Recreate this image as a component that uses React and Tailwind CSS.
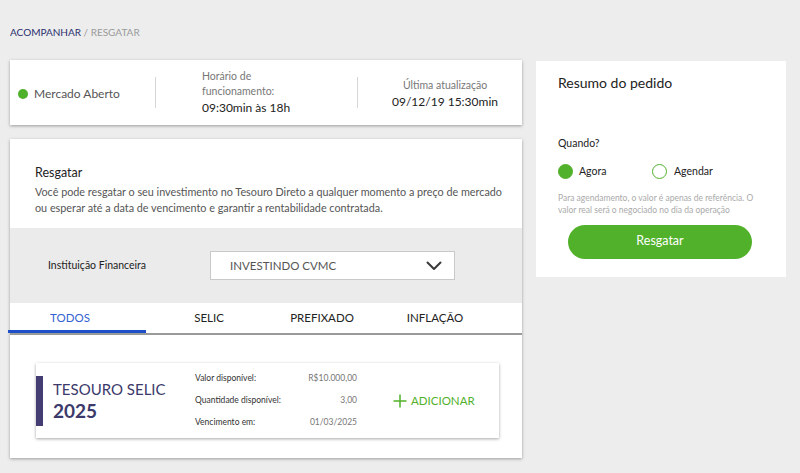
import React, { useState } from "react";

const font = { fontFamily: "Lato, 'Liberation Sans', sans-serif" };

const Chevron = () => (
  <svg width="16" height="10" viewBox="0 0 16 10" fill="none">
    <path d="M1.5 1.5 L8 8 L14.5 1.5" stroke="#3a3a3a" strokeWidth="2" strokeLinecap="round" strokeLinejoin="round" />
  </svg>
);

const tabs = [
  { label: "TODOS", cls: "w-[136px] pr-[16px]" },
  { label: "SELIC", cls: "w-[126px]" },
  { label: "PREFIXADO", cls: "w-[100px]" },
  { label: "INFLAÇÃO", cls: "w-[126px]" },
];

const rows = [
  ["Valor disponível:", "R$10.000,00"],
  ["Quantidade disponível:", "3,00"],
  ["Vencimento em:", "01/03/2025"],
];

export default function App() {
  const [tab, setTab] = useState(0);
  const [when, setWhen] = useState("agora");

  return (
    <div className="w-[800px] h-[473px] bg-[#ededed] overflow-hidden" style={font}>
      {/* breadcrumb */}
      <div className="pt-[25px] pl-[10px] h-[60px] text-[10px]">
        <span className="text-[#2c2f6e]">ACOMPANHAR</span>
        <span className="text-[#9a9a9a]"> / RESGATAR</span>
      </div>

      <div className="flex gap-[14px] pl-[10px]">
        {/* left column */}
        <div className="w-[512px] flex flex-col gap-[14px]">
          {/* status card */}
          <div className="bg-white h-[65px] flex items-center shadow-[0_1px_3px_rgba(0,0,0,0.35)]">
            <div className="w-[145px] flex items-center pl-[8px] gap-[6px] pt-[3px]">
              <span className="w-[10px] h-[10px] rounded-full bg-[#4fb12a]" />
              <span className="text-[12px] text-[#555]">Mercado Aberto</span>
            </div>
            <div className="w-px h-[31px] bg-[#d6d6d6]" />
            <div className="w-[201px] pl-[46px] flex flex-col">
              <span className="text-[10.5px] leading-[15px] text-[#777]">Horário de<br />funcionamento:</span>
              <span className="text-[12px] leading-[18px] text-[#222]">09:30min às 18h</span>
            </div>
            <div className="w-px h-[31px] bg-[#d6d6d6]" />
            <div className="flex-1 pl-[10px] pt-[3px] flex flex-col items-center">
              <span className="text-[10.5px] leading-[16px] text-[#777]">Última atualização</span>
              <span className="text-[12px] leading-[18px] text-[#222]">09/12/19 15:30min</span>
            </div>
          </div>

          {/* main card */}
          <div className="bg-white h-[319px] shadow-[0_1px_3px_rgba(0,0,0,0.35)] flex flex-col">
            <div className="pt-[25px] pl-[25px] pr-[20px] h-[89px]">
              <div className="text-[12.5px] text-[#222] leading-[18px]">Resgatar</div>
              <p className="mt-[2px] text-[10.8px] leading-[16px] text-[#555]">
                Você pode resgatar o seu investimento no Tesouro Direto a qualquer momento a preço de mercado ou esperar até a data de vencimento e garantir a rentabilidade contratada.
              </p>
            </div>

            <div className="bg-[#ebebeb] h-[75px] flex items-center">
              <span className="w-[200px] pl-[38px] text-[10.5px] text-[#222]">Instituição Financeira</span>
              <div className="w-[245px] h-[29px] bg-white border border-[#c9c9c9] flex items-center justify-between pl-[19px] pr-[12px]">
                <span className="text-[11.5px] text-[#555]">INVESTINDO CVMC</span>
                <Chevron />
              </div>
            </div>

            <div className="flex h-[32px] border-b-2 border-[#9a9a9a]">
              {tabs.map((t, i) => (
                <button
                  key={t.label}
                  onClick={() => setTab(i)}
                  className={`${t.cls} relative flex items-center justify-center text-[11.5px] ${tab === i ? "text-[#3461d1]" : "text-[#222]"}`}
                >
                  {t.label}
                  {tab === i && <span className="absolute left-[-2px] right-0 bottom-0 h-[3px] bg-[#1f4fc6]" />}
                </button>
              ))}
            </div>

            <div className="flex-1 pt-[28px] pl-[26px] pr-[23px]">
              <div className="h-[75px] flex items-center shadow-[0_1px_3px_rgba(0,0,0,0.35)] bg-white">
                <span className="w-[7px] h-[50px] bg-[#443d73]" />
                <div className="w-[152px] pl-[10px] text-[#3c3a6b]">
                  <div className="text-[15px] leading-[20px]">TESOURO SELIC</div>
                  <div className="text-[19px] leading-[24px] font-bold">2025</div>
                </div>
                <div className="w-[162px] flex flex-col gap-[9px]">
                  {rows.map(([k, v]) => (
                    <div key={k} className="flex justify-between text-[8.5px] leading-[13px]">
                      <span className="text-[#333]">{k}</span>
                      <span className="text-[#777]">{v}</span>
                    </div>
                  ))}
                </div>
                <button className="ml-[36px] flex items-center gap-[4px] text-[11.5px] text-[#52b12a]">
                  <svg width="14" height="14" viewBox="0 0 14 14">
                    <path d="M7 0.5 V13.5 M0.5 7 H13.5" stroke="#52b12a" strokeWidth="1.5" />
                  </svg>
                  ADICIONAR
                </button>
              </div>
            </div>
          </div>
        </div>

        {/* right column */}
        <div className="w-[250px] h-[216px] mt-[1px] bg-white flex flex-col pl-[22px] pr-[20px]">
          <div className="pt-[12px] text-[14px] leading-[20px] text-[#222]">Resumo do pedido</div>
          <div className="mt-[43px] text-[10.5px] leading-[14px] text-[#222]">Quando?</div>
          <div className="mt-[14px] flex items-center">
            <button onClick={() => setWhen("agora")} className="flex items-center gap-[6px] w-[94px]">
              <span className={`w-[15px] h-[15px] rounded-full border-[1.5px] border-[#52b12a] ${when === "agora" ? "bg-[#52b12a]" : "bg-white"}`} />
              <span className="text-[10.5px] text-[#222]">Agora</span>
            </button>
            <button onClick={() => setWhen("agendar")} className="flex items-center gap-[7px]">
              <span className={`w-[15px] h-[15px] rounded-full border-[1.5px] border-[#52b12a] ${when === "agendar" ? "bg-[#52b12a]" : "bg-white"}`} />
              <span className="text-[10.5px] text-[#222]">Agendar</span>
            </button>
          </div>
          <p className="mt-[12px] text-[8.5px] leading-[12px] text-[#aaa] pr-[4px]">
            Para agendamento, o valor é apenas de referência. O valor real será o negociado no dia da operação
          </p>
          <button className="mt-[9px] ml-[10px] w-[184px] h-[34px] rounded-full bg-[#52b12a] text-white text-[12.5px]">
            Resgatar
          </button>
        </div>
      </div>
    </div>
  );
}
